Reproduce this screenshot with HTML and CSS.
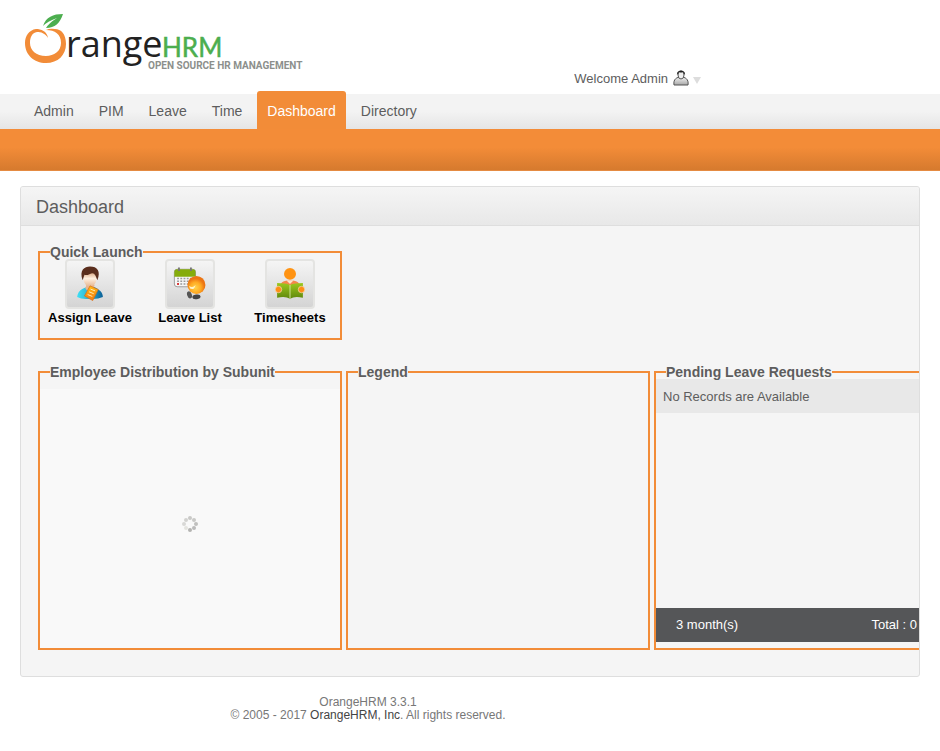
FILE: index.html
```html
<!DOCTYPE html>
<html lang="en">
<head>
<meta charset="utf-8">
<title>OrangeHRM</title>
<link rel="stylesheet" href="styles.css">
</head>
<body>
<header class="branding">
  <a class="logo" href="#" aria-label="OrangeHRM">
    <svg width="290" height="62" viewBox="0 0 290 62">
      <path d="M22 14C25 5 32 2 42 2C39 11 34 16 25 16Q28 11 36 6Q27 9 22 14Z" fill="#4cae4f"/>
      <path d="M27 26C26 19 20 17 15 17C8 18 4 24 4 31C4 43 13 51 25 51C37 51 45 43 45 32C45 22 40 17 34 17Q29 16 25 18C34 18 40 22 40 31C40 39 33 44 25 44C15 44 9 38 9 31C9 25 11 21 16 20C20 20 24 21 27 26Z" fill="#f28c38"/>
      <text x="45" y="45" class="logo-range">range</text>
      <text x="141" y="45" class="logo-hrm">HRM</text>
      <text x="127" y="57" class="logo-tag">OPEN SOURCE HR MANAGEMENT</text>
    </svg>
  </a>
  <a class="welcome" href="#">Welcome Admin
    <svg width="28" height="18" viewBox="0 0 28 18" aria-hidden="true">
      <defs><linearGradient id="coat" x2="0" y2="1"><stop stop-color="#f4f4f4"/><stop offset="1" stop-color="#a8a8a8"/></linearGradient></defs>
      <path d="M1 15C0 9 4 7 8 7S16 9 15 15Z" fill="url(#coat)" stroke="#555"/>
      <ellipse cx="8" cy="5" rx="3" ry="4" fill="#eee" stroke="#555"/>
      <path d="M4 5C3 -1 13 -1 12 5L10 2Q8 3 6 2Z" fill="#222"/>
      <path d="M20 7h8l-4 7z" fill="#ddd"/>
    </svg>
  </a>
</header>
<nav class="menu">
  <a href="#">Admin</a><a href="#">PIM</a><a href="#">Leave</a><a href="#">Time</a><a class="current" href="#">Dashboard</a><a href="#">Directory</a>
</nav>
<div class="submenu"></div>
<main class="box">
  <h1>Dashboard</h1>
  <div class="inner">
    <fieldset class="panel launch">
      <legend>Quick Launch</legend>
      <div class="shortcuts">
        <a href="#">
          <svg class="tile" viewBox="0 0 50 50" aria-hidden="true">
            <defs>
              <linearGradient id="face" x2="0" y2="1"><stop stop-color="#c98a5c"/><stop offset=".5" stop-color="#fff0e0"/><stop offset="1" stop-color="#e5b48e"/></linearGradient>
              <linearGradient id="shirt"><stop stop-color="#3fe0f5"/><stop offset=".5" stop-color="#2aaed0"/><stop offset="1" stop-color="#0b5f96"/></linearGradient>
              <linearGradient id="gold" x2="0" y2="1"><stop stop-color="#ffb914"/><stop offset="1" stop-color="#f47b12"/></linearGradient>
            </defs>
            <path d="M11 39C12 32 17 30 22 28H29C35 31 39 34 39 39Q32 42 25 41Q16 42 11 39Z" fill="url(#shirt)"/>
            <path d="M21 26H30L28 33L25 36L20 30Z" fill="#eab58e"/>
            <ellipse cx="25" cy="19" rx="7" ry="9" fill="url(#face)"/>
            <path d="M17 21C13 10 19 6 25 6C33 6 37 11 33 21L31 16Q29 12 25 14Q21 16 19 15Z" fill="#5a2e1d"/>
            <path d="M25 27L34 31L28 43L19 38Z" fill="url(#gold)" stroke="#d56a12" stroke-width=".7"/>
            <path d="M25.500 30.500l5 2M24 33.500l5 2M22.500 36.500l5 2" stroke="#fff2c4"/>
          </svg>
          <span>Assign Leave</span></a>
        <a href="#">
          <svg class="tile" viewBox="0 0 50 50" aria-hidden="true">
            <defs><radialGradient id="ball" cx=".45" cy=".65"><stop stop-color="#ffd24a"/><stop offset=".6" stop-color="#ffab23"/><stop offset="1" stop-color="#ec7513"/></radialGradient></defs>
            <rect x="8" y="9" width="23" height="19" rx="3" fill="#f7f7f7" stroke="#999"/>
            <path d="M8 17V12Q8 9 11 9H28Q31 9 31 12V17Z" fill="#85ac0b"/>
            <path d="M13 7v4M26 7v4" stroke="#777" stroke-width="2"/>
            <path d="M11 19h17M11 22h17M11 25h17" stroke="#999" stroke-width="1.500" stroke-dasharray="2 1.500"/>
            <path d="M11 25h2" stroke="#d33" stroke-width="2"/>
            <ellipse cx="24.500" cy="37" rx="2.500" ry="4" fill="#555" transform="rotate(-20 24 37)"/>
            <ellipse cx="32" cy="39" rx="4.500" ry="2.500" fill="#444" transform="rotate(-10 32 39)"/>
            <circle cx="32" cy="26" r="9.800" fill="url(#ball)"/>
            <path d="M24 27Q28 30 31 26Q30 32 25 30Z" fill="#fff3c8"/>
          </svg>
          <span>Leave List</span></a>
        <a href="#">
          <svg class="tile" viewBox="0 0 50 50" aria-hidden="true">
            <defs><linearGradient id="book" x2="0" y2="1"><stop stop-color="#9bc81c"/><stop offset="1" stop-color="#5f870c"/></linearGradient></defs>
            <circle cx="25" cy="14" r="6.500" fill="#ff9312"/>
            <path d="M15 25Q17 21 25 21T35 25L25 28Z" fill="#f5874a"/>
            <path d="M21 21L25 25L29 21Z" fill="#fbe3cd"/>
            <path d="M11 24Q20 24 25 26Q30 24 39 24V40Q30 38 25 41Q20 38 11 40Z" fill="url(#book)"/>
            <path d="M25 26V41" stroke="#d8e8a0"/>
            <circle cx="12.500" cy="31" r="3.500" fill="#ff8d16" stroke="#f7dfc0" stroke-width=".7"/>
            <circle cx="37.500" cy="31" r="3.500" fill="#ff8d16" stroke="#f7dfc0" stroke-width=".7"/>
          </svg>
          <span>Timesheets</span></a>
      </div>
    </fieldset>
    <div class="row">
      <fieldset class="panel">
        <legend>Employee Distribution by Subunit</legend>
        <div class="chart">
          <svg width="16" height="16" viewBox="0 0 16 16" role="img" aria-label="Loading">
            <g fill="#c9c9c7"><circle cx="8" cy="2" r="2"/><circle cx="12" cy="4" r="2"/><circle cx="14" cy="8" r="2" fill="#c0c0be"/><circle cx="12" cy="12" r="2" fill="#bbb"/><circle cx="8" cy="14" r="2" fill="#b4b4b2"/><circle cx="4" cy="12" r="2" fill="#e4e4e0"/><circle cx="2" cy="8" r="2" fill="#d8d8d6"/><circle cx="4" cy="4" r="2" fill="#d2d2d0"/></g>
          </svg>
        </div>
      </fieldset>
      <fieldset class="panel"><legend>Legend</legend></fieldset>
      <fieldset class="panel pending">
        <legend>Pending Leave Requests</legend>
        <div class="records">No Records are Available</div>
        <div class="summary"><span>3 month(s)</span><span>Total : 0</span></div>
      </fieldset>
    </div>
  </div>
</main>
<footer class="footer"><div>OrangeHRM 3.3.1</div><div>© 2005 - 2017 <a href="#">OrangeHRM, Inc</a>. All rights reserved.</div></footer>
</body>
</html>
```
FILE: styles.css
```css
* { box-sizing: border-box; }
body { margin: 0; background: #fff; color: #5d5d5d; font: 13px/16px "Liberation Sans", Arial, sans-serif; }
a { color: inherit; text-decoration: none; }
.branding { display: flex; align-items: flex-start; height: 94px; padding: 12px 239px 0 21px; justify-content: space-between; }
.logo svg { display: block; }
.logo-range { font: 36px "Open Sans", sans-serif; fill: #222; }
.logo-hrm { font: 26px Lato, sans-serif; fill: #4cae4f; stroke: #4cae4f; stroke-width: 0.5px; }
.logo-tag { font: bold 10px Roboto, sans-serif; fill: #8c8f8c; }
.welcome { display: flex; align-items: center; gap: 5px; margin-top: 58px; }
.menu { display: flex; align-items: flex-end; height: 35px; padding-left: 24px; gap: 5px; background: linear-gradient(#f3f3f3 50%, #e5e5e5); font-size: 14px; }
.menu a { height: 38px; padding: 12px 10px; border-radius: 3px 3px 0 0; }
.menu .current { background: #f28c38; color: #fff; }
.submenu { height: 42px; background: linear-gradient(#f38c38 45%, #d67a2e); border-bottom: 1px solid #e58b42; }
.box { margin: 15px 20px 0; overflow: hidden; border: 1px solid #dedede; border-radius: 3px; background: #f5f5f5; }
h1 { margin: 0; padding: 2px 15px 0; font-size: 18px; font-weight: normal; line-height: 36px; background: linear-gradient(#f5f5f5, #e8e8e8); border-bottom: 1px solid #dedede; }
.inner { padding: 18px 17px 26px; }
.panel { width: 304px; min-width: 0; flex: none; margin: 0; padding: 0; border: 2px solid #f28c38; }
legend { margin-left: 10px; padding: 2px 0 0; font-size: 14px; font-weight: bold; line-height: 13px; }
.launch { height: 96px; }
.shortcuts { display: grid; grid-template-columns: repeat(3, 1fr); }
.shortcuts a { display: flex; flex-direction: column; align-items: center; gap: 1px; color: #000; font-weight: bold; }
.tile { width: 50px; height: 50px; border: 2px solid #e4e4e2; border-radius: 4px; background: linear-gradient(#f5f5f5, #d4d4d4); }
.row { display: flex; gap: 4px; margin-top: 24px; }
.row .panel { height: 286px; }
.chart { display: flex; align-items: center; justify-content: center; height: 259px; margin-top: 10px; padding-top: 10px; background: #f9f9f9; }
.records { height: 34px; padding: 10px 7px 8px; background: #e8e8e8; }
.summary { display: flex; justify-content: space-between; height: 34px; margin-top: 195px; padding: 9px 39px 9px 20px; background: #555658; color: #fff; }
.footer { margin-top: 19px; padding-right: 204px; text-align: center; font-size: 12px; line-height: 13px; color: #777; }
.footer a { color: #444; }
```
